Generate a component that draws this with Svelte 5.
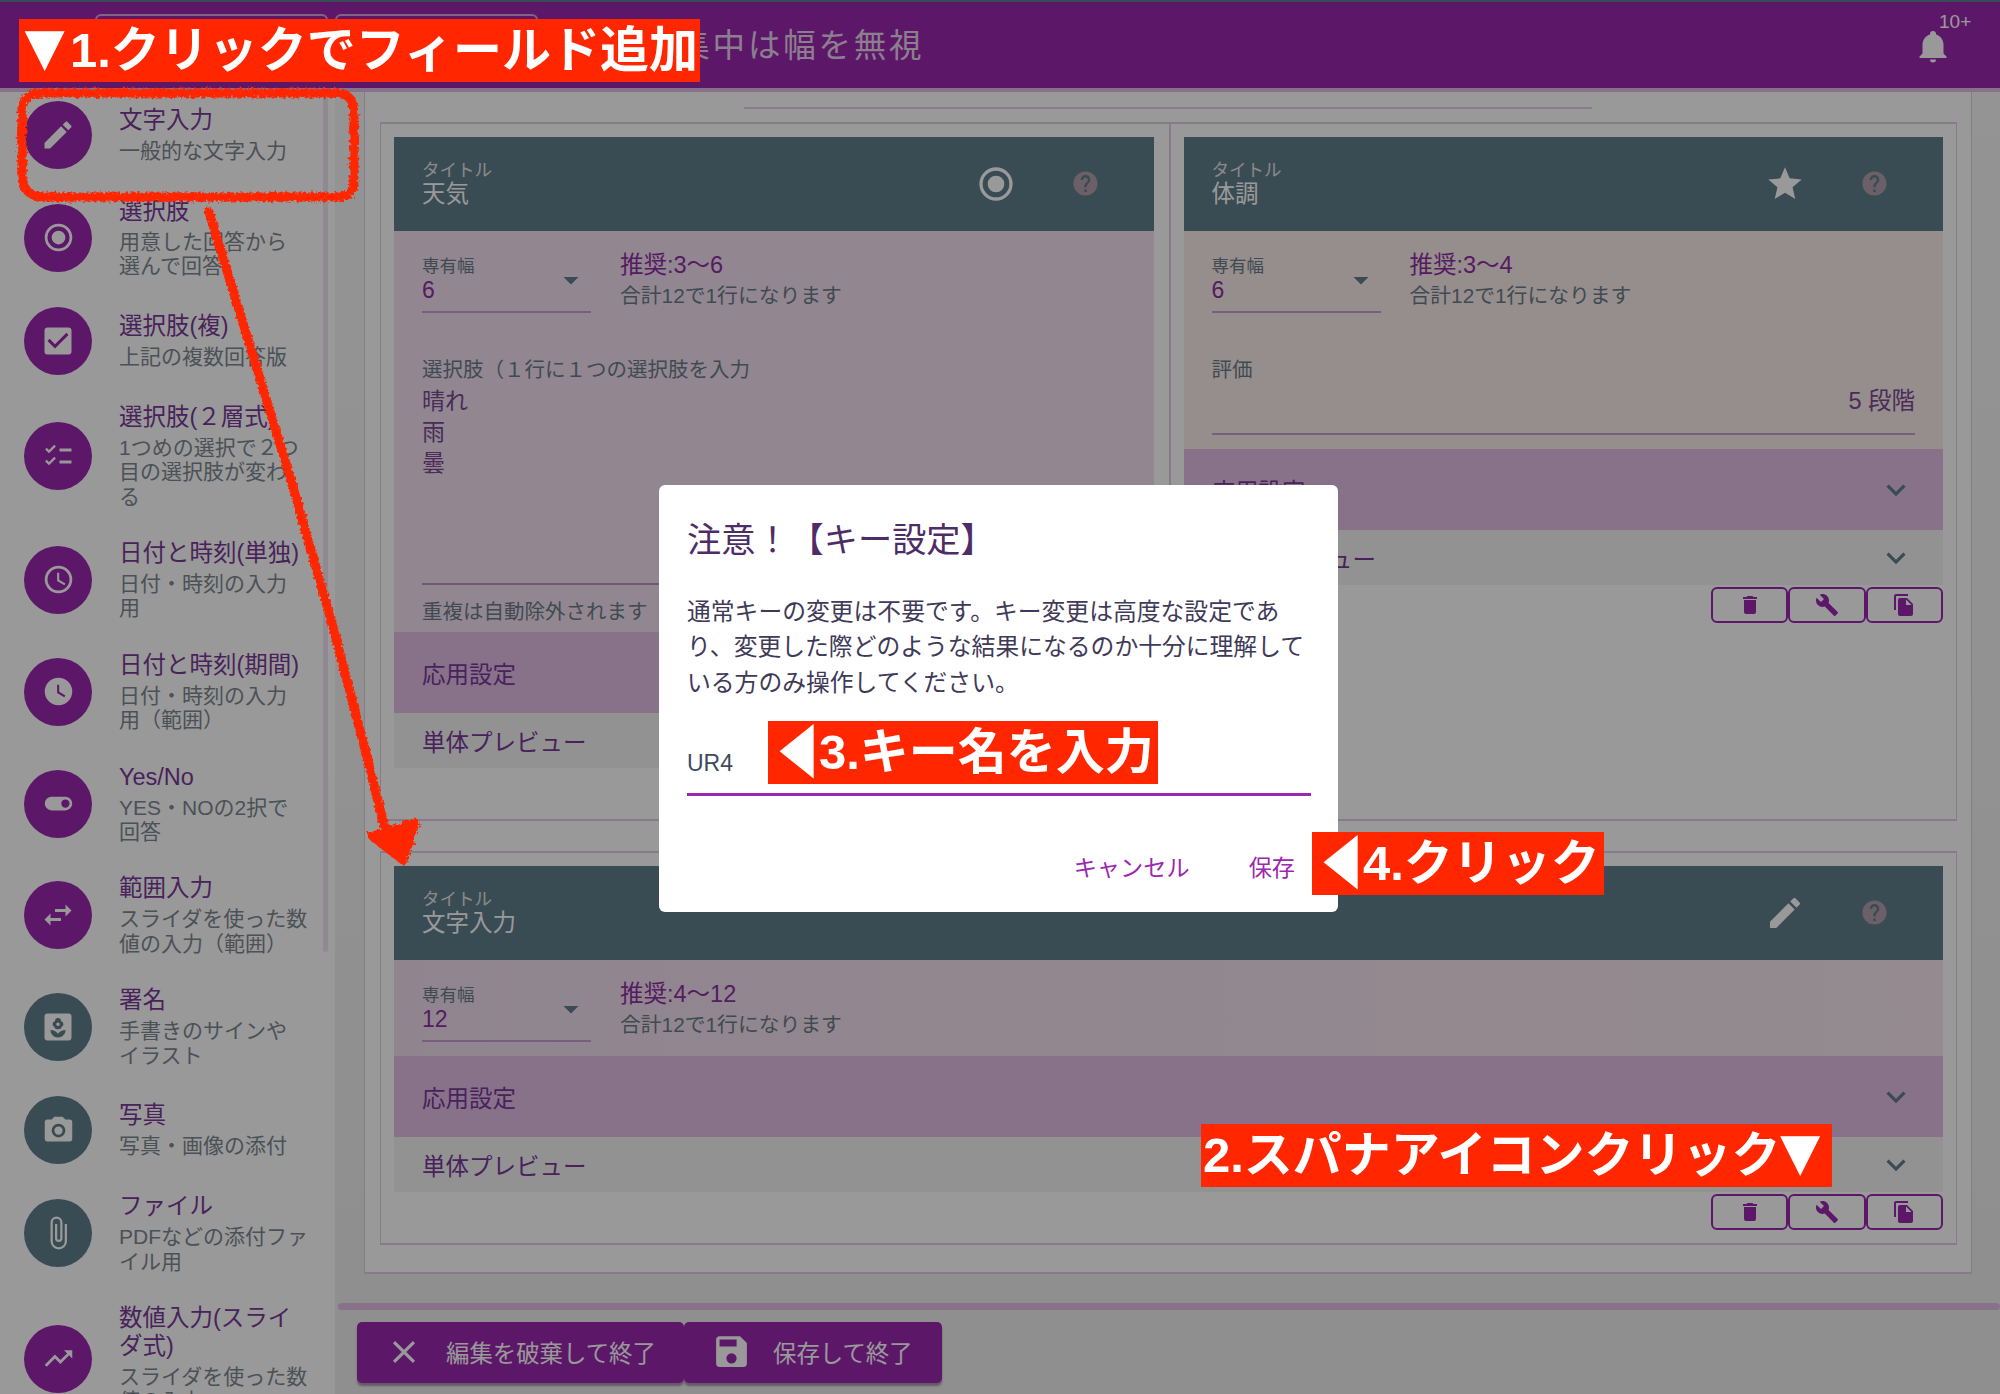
<script>
  const icons = {
    pencil: "M20.71,7.04C21.1,6.65 21.1,6 20.71,5.63L18.37,3.29C18,2.9 17.35,2.9 16.96,3.29L15.12,5.12L18.87,8.87M3,17.25V21H6.75L17.81,9.93L14.06,6.18L3,17.25Z",
    radio: "M12,20A8,8 0 0,1 4,12A8,8 0 0,1 12,4A8,8 0 0,1 20,12A8,8 0 0,1 12,20M12,2A10,10 0 0,0 2,12A10,10 0 0,0 12,22A10,10 0 0,0 22,12A10,10 0 0,0 12,2M12,7A5,5 0 0,0 7,12A5,5 0 0,0 12,17A5,5 0 0,0 17,12A5,5 0 0,0 12,7Z",
    checkbox: "M10,17L5,12L6.41,10.58L10,14.17L17.59,6.58L19,8M19,3H5C3.89,3 3,3.89 3,5V19A2,2 0 0,0 5,21H19A2,2 0 0,0 21,19V5C21,3.89 20.1,3 19,3Z",
    checks: "M3.4,7.6L4.5,6.5L6,8L9.5,4.5L10.6,5.6L6,10.2L3.4,7.6M13,7H21V9H13V7M3.4,15.6L4.5,14.5L6,16L9.5,12.5L10.6,13.6L6,18.2L3.4,15.6M13,15H21V17H13V15Z",
    clockOutline: "M12,20A8,8 0 0,0 20,12A8,8 0 0,0 12,4A8,8 0 0,0 4,12A8,8 0 0,0 12,20M12,2A10,10 0 0,1 22,12A10,10 0 0,1 12,22C6.47,22 2,17.5 2,12A10,10 0 0,1 12,2M12.5,7V12.25L17,14.92L16.25,16.15L11,13V7H12.5Z",
    clock: "M12,2A10,10 0 0,0 2,12A10,10 0 0,0 12,22A10,10 0 0,0 22,12A10,10 0 0,0 12,2M16.2,16.2L11,13V7H12.5V12.2L17,14.9L16.2,16.2Z",
    toggle: "M17,7H7A5,5 0 0,0 2,12A5,5 0 0,0 7,17H17A5,5 0 0,0 22,12A5,5 0 0,0 17,7M17,15A3,3 0 0,1 14,12A3,3 0 0,1 17,9A3,3 0 0,1 20,12A3,3 0 0,1 17,15Z",
    swap: "M21,9L17,5V8H10V10H17V13M7,11L3,15L7,19V16H14V14H7V11Z",
    flower: "M5,3H19A2,2 0 0,1 21,5V19A2,2 0 0,1 19,21H5A2,2 0 0,1 3,19V5A2,2 0 0,1 5,3M12,6A2,2 0 0,0 10,8L10,8.2A2,2 0 0,0 9.6,12A2,2 0 0,0 12,13.4A2,2 0 0,0 14.4,12A2,2 0 0,0 14,8.2L14,8A2,2 0 0,0 12,6M12,9A1.2,1.2 0 0,1 13.2,10.2A1.2,1.2 0 0,1 12,11.4A1.2,1.2 0 0,1 10.8,10.2A1.2,1.2 0 0,1 12,9M7,14C7,16.8 9.2,19 12,19C14.8,19 17,16.8 17,14C15,14 13,15 12,16.5C11,15 9,14 7,14Z",
    camera: "M4,4H7L9,2H15L17,4H20A2,2 0 0,1 22,6V18A2,2 0 0,1 20,20H4A2,2 0 0,1 2,18V6A2,2 0 0,1 4,4M12,7A5,5 0 0,0 7,12A5,5 0 0,0 12,17A5,5 0 0,0 17,12A5,5 0 0,0 12,7M12,9A3,3 0 0,1 15,12A3,3 0 0,1 12,15A3,3 0 0,1 9,12A3,3 0 0,1 12,9Z",
    clip: "M16.5,6V17.5A4,4 0 0,1 12.5,21.5A4,4 0 0,1 8.5,17.5V5A2.5,2.5 0 0,1 11,2.5A2.5,2.5 0 0,1 13.5,5V15.5A1,1 0 0,1 12.5,16.5A1,1 0 0,1 11.5,15.5V6H10V15.5A2.5,2.5 0 0,0 12.5,18A2.5,2.5 0 0,0 15,15.5V5A4,4 0 0,0 11,1A4,4 0 0,0 7,5V17.5A5.5,5.5 0 0,0 12.5,23A5.5,5.5 0 0,0 18,17.5V6H16.5Z",
    trend: "M16,6L18.29,8.29L13.41,13.17L9.41,9.17L2,16.59L3.41,18L9.41,12L13.41,16L19.71,9.71L22,12V6H16Z",
    bell: "M21,19V20H3V19L5,17V11C5,7.9 7.03,5.17 10,4.29C10,4.19 10,4.1 10,4A2,2 0 0,1 12,2A2,2 0 0,1 14,4C14,4.1 14,4.19 14,4.29C16.97,5.17 19,7.9 19,11V17L21,19M14,21A2,2 0 0,1 12,23A2,2 0 0,1 10,21",
    help: "M15.07,11.25L14.17,12.17C13.45,12.89 13,13.5 13,15H11V14.5C11,13.39 11.45,12.39 12.17,11.67L13.41,10.41C13.78,10.05 14,9.55 14,9C14,7.89 13.1,7 12,7A2,2 0 0,0 10,9H8A4,4 0 0,1 12,5A4,4 0 0,1 16,9C16,9.88 15.64,10.67 15.07,11.25M13,19H11V17H13M12,2A10,10 0 0,0 2,12C2,17.53 6.47,22 12,22C17.53,22 22,17.53 22,12C22,6.47 17.5,2 12,2Z",
    star: "M12,17.27L18.18,21L16.54,13.97L22,9.24L14.81,8.62L12,2L9.19,8.62L2,9.24L7.45,13.97L5.82,21L12,17.27Z",
    chevron: "M7.41,8.58L12,13.17L16.59,8.58L18,10L12,16L6,10L7.41,8.58Z",
    menuDown: "M7,10L12,15L17,10H7Z",
    trash: "M19,4H15.5L14.5,3H9.5L8.5,4H5V6H19M6,19A2,2 0 0,0 8,21H16A2,2 0 0,0 18,19V7H6V19Z",
    wrench: "M22.7,19L13.6,9.9C14.5,7.6 14,4.9 12.1,3C10.1,1 7.1,0.6 4.7,1.7L9,6L6,9L1.6,4.7C0.4,7.1 0.9,10.1 2.9,12.1C4.8,14 7.5,14.5 9.8,13.6L18.9,22.7C19.3,23.1 19.9,23.1 20.3,22.7L22.6,20.4C23.1,20 23.1,19.3 22.7,19Z",
    copy: "M16 1H4c-1.1 0-2 .9-2 2v14h2V3h12V1zm-1 4l6 6v10c0 1.1-.9 2-2 2H7.99C6.89 23 6 22.1 6 21l.01-14c0-1.1.89-2 1.99-2h7zm-1 7h5.5L14 6.5V12z",
    close: "M19,6.41L17.59,5L12,10.59L6.41,5L5,6.41L10.59,12L5,17.59L6.41,19L12,13.41L17.59,19L19,17.59L13.41,12L19,6.41Z",
    save: "M15,9H5V5H15M12,19A3,3 0 0,1 9,16A3,3 0 0,1 12,13A3,3 0 0,1 15,16A3,3 0 0,1 12,19M17,3H5C3.89,3 3,3.9 3,5V19A2,2 0 0,0 5,21H19A2,2 0 0,0 21,19V7L17,3Z"
  }

  const fields = [
    { icon: "pencil", title: "文字入力", sub: "一般的な文字入力" },
    { icon: "radio", title: "選択肢", sub: "用意した回答から\n選んで回答", small: true },
    { icon: "checkbox", title: "選択肢(複)", sub: "上記の複数回答版" },
    { icon: "checks", title: "選択肢(２層式)", sub: "1つめの選択で２つ\n目の選択肢が変わ\nる" },
    { icon: "clockOutline", title: "日付と時刻(単独)", sub: "日付・時刻の入力\n用", small: true },
    { icon: "clock", title: "日付と時刻(期間)", sub: "日付・時刻の入力\n用（範囲）", small: true },
    { icon: "toggle", title: "Yes/No", sub: "YES・NOの2択で\n回答", small: true },
    { icon: "swap", title: "範囲入力", sub: "スライダを使った数\n値の入力（範囲）" },
    { icon: "flower", title: "署名", sub: "手書きのサインや\nイラスト", grey: true },
    { icon: "camera", title: "写真", sub: "写真・画像の添付", grey: true, small: true },
    { icon: "clip", title: "ファイル", sub: "PDFなどの添付ファ\nイル用", grey: true },
    { icon: "trend", title: "数値入力(スライ\nダ式)", sub: "スライダを使った数\n値の入力", small: true }
  ]

  const cards = [
    { title: "天気", icon: "radio", width: "6", rec: "推奨:3〜6", tint: "left", kind: "choice" },
    { title: "体調", icon: "star", width: "6", rec: "推奨:3〜4", tint: "right", kind: "rating" },
    { title: "文字入力", icon: "pencil", width: "12", rec: "推奨:4〜12", tint: "wide", kind: "text" }
  ]
</script>

{#snippet icon(name, cls)}
  <svg class={cls} viewBox="0 0 24 24" aria-hidden="true"><path d={icons[name]} /></svg>
{/snippet}

{#snippet card(c)}
  <div class="card">
    <div class="card-head">
      <div class="head-text">
        <div class="head-label">タイトル</div>
        <div class="head-title">{c.title}</div>
      </div>
      {@render icon(c.icon, "head-icon")}
      {@render icon("help", "help-icon")}
    </div>
    <div class="card-body {c.tint}">
      <div class="width-row">
        <div class="select">
          <div class="select-label">専有幅</div>
          <div class="select-value">
            <span>{c.width}</span>
            {@render icon("menuDown", "menu-down")}
          </div>
        </div>
        <div class="hints">
          <div class="rec">{c.rec}</div>
          <div class="total">合計12で1行になります</div>
        </div>
      </div>
      {#if c.kind === "choice"}
        <div class="field-label">選択肢（１行に１つの選択肢を入力</div>
        <div class="choices">
          <div>晴れ</div>
          <div>雨</div>
          <div>曇</div>
        </div>
        <div class="note">重複は自動除外されます</div>
      {:else if c.kind === "rating"}
        <div class="field-label">評価</div>
        <div class="rating">5 段階</div>
      {/if}
    </div>
    <div class="panel advanced">
      <span>応用設定</span>
      {@render icon("chevron", "chevron")}
    </div>
    <div class="panel preview">
      <span>単体プレビュー</span>
      {@render icon("chevron", "chevron")}
    </div>
  </div>
  <div class="tools">
    <button class="tool">{@render icon("trash", "tool-icon")}</button>
    <button class="tool">{@render icon("wrench", "tool-icon")}</button>
    <button class="tool">{@render icon("copy", "tool-icon")}</button>
  </div>
{/snippet}

<div class="page">
  <header class="topbar">
    <div class="tab first"></div>
    <div class="tab second"></div>
    <div class="page-title">編集中は幅を無視</div>
    <div class="bell">
      {@render icon("bell", "bell-icon")}
      <span class="badge">10+</span>
    </div>
  </header>

  <div class="content">
    <aside class="sidebar">
      {#each fields as f}
        <div class="item">
          <div class="avatar" class:grey={f.grey} class:small={f.small}>{@render icon(f.icon, "avatar-icon")}</div>
          <div class="item-text">
            <div class="item-title">{f.title}</div>
            <div class="item-sub">{f.sub}</div>
          </div>
        </div>
      {/each}
      <div class="scrollbar"></div>
    </aside>

    <main class="main">
      <div class="editor">
        <div class="outer">
          <div class="rule"></div>
          <div class="row two">
            <div class="cell">{@render card(cards[0])}</div>
            <div class="cell">{@render card(cards[1])}</div>
          </div>
          <div class="row">
            <div class="cell">{@render card(cards[2])}</div>
          </div>
        </div>
      </div>
      <footer class="footer">
        <div class="footer-bar"></div>
        <div class="actions">
          <button class="action discard">{@render icon("close", "close-icon")}編集を破棄して終了</button>
          <button class="action keep">{@render icon("save", "save-icon")}保存して終了</button>
        </div>
      </footer>
    </main>
  </div>

  <div class="scrim">
    <div class="dialog">
      <div class="dialog-title">注意！【キー設定】</div>
      <p class="dialog-text">通常キーの変更は不要です。キー変更は高度な設定であり、変更した際どのような結果になるのか十分に理解している方のみ操作してください。</p>
      <div class="key-input">UR4</div>
      <div class="dialog-actions">
        <span>キャンセル</span>
        <span>保存</span>
      </div>
    </div>
  </div>

  <svg class="marks" viewBox="0 0 2000 1394" aria-hidden="true">
    <defs>
      <filter id="rough" x="-5%" y="-5%" width="110%" height="110%">
        <feTurbulence type="fractalNoise" baseFrequency="0.35" numOctaves="2" seed="4" />
        <feDisplacementMap in="SourceGraphic" scale="7" />
      </filter>
    </defs>
    <g filter="url(#rough)" fill="none" stroke="#ff2600" stroke-width="9" stroke-linecap="round" stroke-linejoin="round">
      <path d="M354 149V180Q354 197 337 197H45Q22 197 22 175V112Q22 93 42 93H335Q354 93 354 112V141" />
      <path d="M209 212L291 480L333 627L360 730L388 840" stroke-width="9" />
      <path d="M372 836L415 823L403 860Z" fill="#ff2600" />
    </g>
  </svg>

  <div class="note-tag tag1"><span class="down">▼</span>1.クリックでフィールド追加</div>
  <div class="note-tag tag2">2.スパナアイコンクリック<span class="down">▼</span></div>
  <div class="note-tag tag3"><span class="left-tri">◀</span>3.キー名を入力</div>
  <div class="note-tag tag4"><span class="left-tri">◀</span>4.クリック</div>
</div>

<style>
  :global(body) {
    margin: 0;
    background: #f0f0f0;
  }

  .page {
    position: relative;
    width: 2000px;
    height: 1394px;
    overflow: hidden;
    display: flex;
    flex-direction: column;
    font-family: "Liberation Sans", "Noto Sans CJK JP", sans-serif;
    color: #6a7d88;
  }

  .topbar {
    position: relative;
    z-index: 2;
    flex: none;
    box-sizing: border-box;
    height: 88px;
    border-top: 2px solid #607d8b;
    background: #9c27b0;
    box-shadow: 0 4px 0 #e1bee7;
    display: flex;
    padding: 12px 49px 0 95px;
  }

  .tab {
    box-sizing: border-box;
    height: 60px;
    border: 2px solid #d6a5de;
    border-bottom: 0;
    border-radius: 6px 6px 0 0;
  }

  .tab.first {
    width: 233px;
    margin-right: 7px;
  }

  .tab.second {
    width: 203px;
  }

  .page-title {
    margin-left: 104px;
    flex: 1;
    height: 64px;
    line-height: 64px;
    font-size: 32.5px;
    letter-spacing: 2.8px;
    color: #e8d4ec;
  }

  .bell {
    position: relative;
    width: 36px;
    height: 36px;
    margin-top: 14px;
  }

  .bell-icon {
    display: block;
    width: 36px;
    height: 36px;
    fill: #fff;
  }

  .badge {
    position: absolute;
    left: 24px;
    top: -17px;
    font-size: 19px;
    line-height: 22px;
    color: #fff;
  }

  .content {
    flex: 1;
    min-height: 0;
    display: flex;
  }

  .sidebar {
    position: relative;
    flex: none;
    width: 335px;
    height: 1306px;
    overflow: hidden;
    background: #fff;
  }

  .scrollbar {
    position: absolute;
    left: 323px;
    top: 0;
    width: 5px;
    height: 864px;
    border-radius: 3px;
    background: #f2e4f3;
  }

  .item {
    box-sizing: border-box;
    min-height: 94px;
    padding: 15px 20px 15px 24px;
    display: flex;
    align-items: center;
  }

  .avatar {
    flex: none;
    width: 68px;
    height: 68px;
    border-radius: 50%;
    background: #9c27b0;
    display: flex;
    align-items: center;
    justify-content: center;
    margin: -4px 27px -4px 0;
  }

  .avatar.grey {
    background: #607d8b;
  }

  .avatar-icon {
    width: 36px;
    height: 36px;
    fill: #fff;
  }

  :global(.avatar.small svg) {
    width: 33px;
    height: 33px;
  }

  .item-title {
    font-size: 23.5px;
    line-height: 28px;
    margin-bottom: 5px;
    color: #7a3a9a;
    white-space: pre;
  }

  .item-sub {
    font-size: 21px;
    line-height: 24.4px;
    color: #7d8890;
    white-space: pre;
  }

  .main {
    flex: 1;
    min-width: 0;
    display: flex;
    flex-direction: column;
    background: linear-gradient(#f7f7f7, #eeeeee);
  }

  .editor {
    flex: 1;
    padding: 0 28px 29px 29px;
  }

  .outer {
    box-sizing: border-box;
    height: 1186px;
    background: #fff;
    border: 1px solid #e1cde5;
    border-bottom-width: 2px;
    padding: 17px 14px 0 15px;
  }

  .rule {
    width: 848px;
    height: 2px;
    margin: 1px 0 13px 364px;
    background: #e6cfe9;
  }

  .row {
    box-sizing: border-box;
    border: 1px solid #e1cde5;
    border-top-width: 2px;
    border-bottom-width: 2px;
    margin-bottom: 30px;
  }

  .row.two {
    display: grid;
    grid-template-columns: 1fr 1fr;
  }

  .cell {
    padding: 13px;
  }

  .two .cell:first-child {
    padding-right: 15px;
  }

  .two .cell + .cell {
    border-left: 2px solid #e1cde5;
  }

  .card-head {
    height: 94px;
    box-sizing: border-box;
    padding: 0 54px 0 28px;
    background: #607d8b;
    display: flex;
    align-items: center;
  }

  .head-text {
    flex: 1;
    margin-top: -2px;
  }

  .head-label {
    font-size: 17.5px;
    line-height: 22px;
    color: #e4e4e4;
  }

  .head-title {
    font-size: 23.5px;
    line-height: 26px;
    color: #fff;
  }

  .head-icon {
    width: 40px;
    height: 40px;
    fill: #fff;
    margin: -1px 55px 0 0;
  }

  .help-icon {
    width: 29px;
    height: 29px;
    margin-top: -1px;
    fill: #b2a0ad;
  }

  .card-body {
    padding: 25px 28px 14px;
  }

  .card-body.left {
    background: #f3dff2;
  }

  .card-body.right {
    background: #fbebeb;
  }

  .card-body.wide {
    background: linear-gradient(90deg, #f1deee, #f7e7ef);
  }

  .width-row {
    display: flex;
    height: 57px;
  }

  .select {
    box-sizing: border-box;
    width: 169px;
    height: 57px;
    border-bottom: 2px solid #c79fd0;
  }

  .select-label {
    font-size: 17.5px;
    line-height: 20px;
  }

  .select-value {
    display: flex;
    justify-content: space-between;
    font-size: 23px;
    line-height: 28px;
    color: #8f2fa5;
  }

  .menu-down {
    width: 36px;
    height: 36px;
    margin: -14px 2px 0 0;
    fill: #607d8b;
  }

  .hints {
    margin: -6px 0 0 29px;
  }

  .rec {
    font-size: 23.5px;
    line-height: 30px;
    color: #8f2fa5;
  }

  .total {
    margin-top: 2px;
    font-size: 20.8px;
    line-height: 28px;
  }

  .field-label {
    margin-top: 44px;
    font-size: 20.5px;
    line-height: 26px;
  }

  .choices {
    box-sizing: border-box;
    height: 199px;
    margin-top: 3px;
    border-bottom: 2px solid #b793be;
    font-size: 23px;
    line-height: 31px;
    color: #7a4a95;
  }

  .note {
    margin: 15px 0 -6px;
    font-size: 20.5px;
    line-height: 24px;
  }

  .rating {
    box-sizing: border-box;
    height: 49px;
    margin-top: 3px;
    border-bottom: 2px solid #c79fd0;
    font-size: 23.5px;
    line-height: 31px;
    text-align: right;
    color: #7a4a95;
  }

  .panel {
    box-sizing: border-box;
    display: flex;
    align-items: center;
    justify-content: space-between;
    padding: 0 28px;
    font-size: 23.5px;
    color: #7a3a9a;
  }

  .panel.advanced {
    height: 81px;
    background: #e1bee7;
  }

  .panel.preview {
    height: 55px;
    background: #f4f4f4;
  }

  .chevron {
    width: 38px;
    height: 38px;
    fill: #607d8b;
  }

  .tools {
    display: flex;
    justify-content: flex-end;
    margin-top: 2px;
  }

  .tool {
    box-sizing: border-box;
    width: 77.3px;
    height: 36px;
    padding: 0;
    background: transparent;
    border: 2px solid #9c27b0;
    border-radius: 6px;
    display: flex;
    align-items: center;
    justify-content: center;
  }

  .tool-icon {
    width: 24px;
    height: 24px;
    fill: #9c27b0;
  }

  .footer {
    flex: none;
    height: 91px;
    box-sizing: border-box;
    padding-left: 3px;
  }

  .footer-bar {
    height: 7px;
    border-radius: 4px;
    background: #e1bee7;
  }

  .actions {
    display: flex;
    margin: 12px 0 0 19px;
  }

  .action {
    box-sizing: border-box;
    height: 61px;
    border: 0;
    border-radius: 5px;
    background: #9c27b0;
    color: #fff;
    font-family: inherit;
    font-size: 23.4px;
    display: flex;
    align-items: center;
    padding: 0 0 2px;
    box-shadow: 0 3px 2px rgba(120, 70, 130, 0.55);
  }

  .discard {
    width: 327px;
    padding-left: 28px;
  }

  .keep {
    width: 258px;
    padding-left: 27px;
  }

  .close-icon {
    width: 38px;
    height: 38px;
    fill: #fff;
    margin-right: 23px;
  }

  .save-icon {
    width: 41px;
    height: 41px;
    fill: #fff;
    margin-right: 21px;
  }

  .scrim {
    position: absolute;
    inset: 0;
    z-index: 3;
    background: rgba(0, 0, 0, 0.4);
    display: flex;
    align-items: center;
    justify-content: center;
  }

  .dialog {
    box-sizing: border-box;
    width: 679px;
    height: 427px;
    margin: 2px 3px 0 0;
    padding: 33px 27px 0 28px;
    border-radius: 6px;
    background: #fff;
    display: flex;
    flex-direction: column;
  }

  .dialog-title {
    font-size: 34.2px;
    line-height: 44px;
    color: #4e2c66;
  }

  .dialog-text {
    margin: 32px 0 0;
    font-size: 23.8px;
    line-height: 35.5px;
    color: #3f3a58;
  }

  .key-input {
    box-sizing: border-box;
    height: 63px;
    margin-top: 33px;
    padding-top: 15px;
    border-bottom: 3px solid #9c27b0;
    font-size: 23px;
    line-height: 30px;
    color: #3f4a5c;
  }

  .dialog-actions {
    margin-top: 57px;
    display: flex;
    justify-content: flex-end;
    gap: 59px;
    padding-right: 16px;
    font-size: 23.2px;
    line-height: 30px;
    color: #9c27b0;
  }

  .marks {
    position: absolute;
    z-index: 4;
    left: 0;
    top: 0;
    width: 2000px;
    height: 1394px;
    pointer-events: none;
  }

  .note-tag {
    position: absolute;
    z-index: 5;
    box-sizing: border-box;
    height: 63px;
    line-height: 63px;
    background: #ff2600;
    color: #fff;
    font-weight: 700;
    font-size: 49px;
    white-space: nowrap;
  }

  .down {
    display: inline-block;
    width: 40px;
    height: 63px;
    vertical-align: top;
    font-size: 68px;
    text-indent: -14px;
    transform: translateY(-4px);
  }

  .left-tri {
    display: inline-block;
    width: 32px;
    height: 63px;
    margin-right: 10px;
    vertical-align: top;
    font-size: 58px;
    transform: scaleX(0.72);
    transform-origin: 0 50%;
  }

  .tag1 {
    left: 19px;
    top: 19px;
    width: 681px;
    padding-left: 6px;
  }

  .tag1 .down {
    margin-right: 5px;
  }

  .tag2 {
    left: 1201px;
    top: 1124px;
    width: 631px;
    padding-left: 2px;
  }

  .tag3 {
    left: 768px;
    top: 721px;
    width: 390px;
    padding-left: 9px;
  }

  .tag4 {
    left: 1312px;
    top: 832px;
    width: 292px;
    padding-left: 9px;
  }
</style>
